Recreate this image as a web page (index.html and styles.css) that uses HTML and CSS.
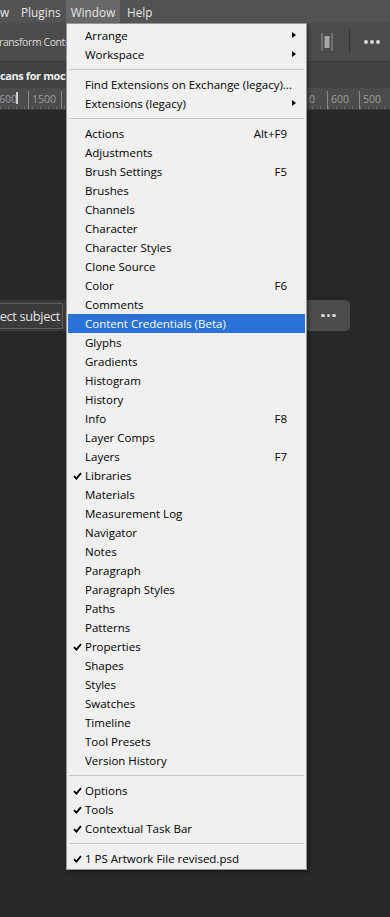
FILE: index.html
```html
<!DOCTYPE html>
<html>
<head>
<meta charset="utf-8">
<link rel="stylesheet" href="styles.css">
</head>
<body>
<div class="app">
  <div class="menubar">
    <span class="mb-item mb-clip">w</span>
    <span class="mb-item mb-plugins">Plugins</span>
    <span class="mb-item mb-active">Window</span>
    <span class="mb-item mb-help">Help</span>
  </div>
  <div class="optionsbar">
    <span class="opt-text">ransform Controls</span>
    <div class="opt-right">
      <svg class="opt-icon" width="12" height="18" viewBox="0 0 12 18"><rect x="0.5" y="0" width="1" height="18" fill="#9a9a9a"/><rect x="10.5" y="0" width="1" height="18" fill="#9a9a9a"/><rect x="3.5" y="3" width="5" height="12" fill="#a8a8a8"/></svg>
      <span class="opt-sep"></span>
      <span class="dots">
        <i></i><i></i><i></i>
      </span>
    </div>
  </div>
  <div class="tabbar"><span class="tab-text">cans for mockup.psd</span></div>
  <div class="ruler">
    <span class="r-num r1">600</span><span class="r-tick t-a"></span>
    <span class="r-num r2">1500</span>
    <span class="r-num r3">1</span>
    <span class="r-num r4">0</span>
    <span class="r-num r5">600</span>
    <span class="r-num r6">500</span>
  </div>
  <div class="canvas">
    <div class="taskbar">
      <div class="tb-btn"><span class="tb-label">ect subject</span></div>
      <div class="tb-more"><span class="dots small"><i></i><i></i><i></i></span></div>
    </div>
  </div>

  <div class="menu">
    <div class="mi"><span class="lbl">Arrange</span><span class="arrow"></span></div>
    <div class="mi"><span class="lbl">Workspace</span><span class="arrow"></span></div>
    <div class="sep"></div>
    <div class="mi"><span class="lbl">Find Extensions on Exchange (legacy)...</span></div>
    <div class="mi"><span class="lbl">Extensions (legacy)</span><span class="arrow"></span></div>
    <div class="sep"></div>
    <div class="mi"><span class="lbl">Actions</span><span class="sc">Alt+F9</span></div>
    <div class="mi"><span class="lbl">Adjustments</span></div>
    <div class="mi"><span class="lbl">Brush Settings</span><span class="sc">F5</span></div>
    <div class="mi"><span class="lbl">Brushes</span></div>
    <div class="mi"><span class="lbl">Channels</span></div>
    <div class="mi"><span class="lbl">Character</span></div>
    <div class="mi"><span class="lbl">Character Styles</span></div>
    <div class="mi"><span class="lbl">Clone Source</span></div>
    <div class="mi"><span class="lbl">Color</span><span class="sc">F6</span></div>
    <div class="mi"><span class="lbl">Comments</span></div>
    <div class="mi hl"><span class="lbl">Content Credentials (Beta)</span></div>
    <div class="mi"><span class="lbl">Glyphs</span></div>
    <div class="mi"><span class="lbl">Gradients</span></div>
    <div class="mi"><span class="lbl">Histogram</span></div>
    <div class="mi"><span class="lbl">History</span></div>
    <div class="mi"><span class="lbl">Info</span><span class="sc">F8</span></div>
    <div class="mi"><span class="lbl">Layer Comps</span></div>
    <div class="mi"><span class="lbl">Layers</span><span class="sc">F7</span></div>
    <div class="mi chk"><svg class="check" width="9" height="8" viewBox="0 0 9 8"><path d="M1 4.2 L3.4 6.6 L8 1.2" fill="none" stroke="#000" stroke-width="1.8"/></svg><span class="lbl">Libraries</span></div>
    <div class="mi"><span class="lbl">Materials</span></div>
    <div class="mi"><span class="lbl">Measurement Log</span></div>
    <div class="mi"><span class="lbl">Navigator</span></div>
    <div class="mi"><span class="lbl">Notes</span></div>
    <div class="mi"><span class="lbl">Paragraph</span></div>
    <div class="mi"><span class="lbl">Paragraph Styles</span></div>
    <div class="mi"><span class="lbl">Paths</span></div>
    <div class="mi"><span class="lbl">Patterns</span></div>
    <div class="mi chk"><svg class="check" width="9" height="8" viewBox="0 0 9 8"><path d="M1 4.2 L3.4 6.6 L8 1.2" fill="none" stroke="#000" stroke-width="1.8"/></svg><span class="lbl">Properties</span></div>
    <div class="mi"><span class="lbl">Shapes</span></div>
    <div class="mi"><span class="lbl">Styles</span></div>
    <div class="mi"><span class="lbl">Swatches</span></div>
    <div class="mi"><span class="lbl">Timeline</span></div>
    <div class="mi"><span class="lbl">Tool Presets</span></div>
    <div class="mi"><span class="lbl">Version History</span></div>
    <div class="sep"></div>
    <div class="mi chk"><svg class="check" width="9" height="8" viewBox="0 0 9 8"><path d="M1 4.2 L3.4 6.6 L8 1.2" fill="none" stroke="#000" stroke-width="1.8"/></svg><span class="lbl">Options</span></div>
    <div class="mi chk"><svg class="check" width="9" height="8" viewBox="0 0 9 8"><path d="M1 4.2 L3.4 6.6 L8 1.2" fill="none" stroke="#000" stroke-width="1.8"/></svg><span class="lbl">Tools</span></div>
    <div class="mi chk"><svg class="check" width="9" height="8" viewBox="0 0 9 8"><path d="M1 4.2 L3.4 6.6 L8 1.2" fill="none" stroke="#000" stroke-width="1.8"/></svg><span class="lbl">Contextual Task Bar</span></div>
    <div class="sep"></div>
    <div class="mi chk"><svg class="check" width="9" height="8" viewBox="0 0 9 8"><path d="M1 4.2 L3.4 6.6 L8 1.2" fill="none" stroke="#000" stroke-width="1.8"/></svg><span class="lbl">1 PS Artwork File revised.psd</span></div>
  </div>
</div>
</body>
</html>
```

FILE: styles.css
```css
* { box-sizing: border-box; }
html, body { margin: 0; padding: 0; }
body {
  background: #282828;
  font-family: "Open Sans", "Noto Sans", sans-serif;
  width: 390px;
  height: 917px;
  overflow: hidden;
}
.app {
  position: relative;
  width: 390px;
  height: 917px;
  overflow: hidden;
  display: flex;
  flex-direction: column;
}
.menubar {
  height: 23px;
  background: #535353;
  display: flex;
  align-items: stretch;
  color: #e6e6e6;
  font-size: 11.8px;
}
.mb-item {
  display: flex;
  align-items: center;
  white-space: nowrap;
}
.mb-clip { width: 21px; padding-left: 0; }
.mb-plugins { width: 45px; }
.mb-active { background: #686868; width: 54px; justify-content: center; }
.mb-help { padding-left: 7px; }
.optionsbar {
  height: 39px;
  background: #4b4b4b;
  display: flex;
  align-items: center;
  justify-content: space-between;
  border-bottom: 1px solid #3a3a3a;
}
.opt-text {
  color: #dcdcdc;
  font-size: 10.4px;
  letter-spacing: -0.35px;
  white-space: nowrap;
  margin-left: -1px;
}
.opt-right {
  display: flex;
  align-items: center;
  height: 100%;
}
.opt-icon { margin-right: 16px; }
.opt-sep {
  width: 1px;
  height: 24px;
  background: #333;
  margin-right: 14px;
}
.dots {
  display: flex;
  gap: 2px;
  margin-right: 10px;
}
.dots i {
  display: block;
  width: 4px;
  height: 4px;
  border-radius: 50%;
  background: #d6d6d6;
}
.tabbar {
  height: 26px;
  background: #424242;
  display: flex;
  align-items: center;
}
.tab-text {
  color: #f0f0f0;
  font-weight: bold;
  font-size: 11px;
  letter-spacing: -0.4px;
  white-space: nowrap;
}
.ruler {
  height: 22px;
  position: relative;
  border-bottom: 1px solid #3e3e3e;
  background-image: repeating-linear-gradient(90deg, #6a6a6a 0 1px, transparent 1px 8px);
  background-size: 100% 3px;
  background-position: 0 100%;
  background-repeat: no-repeat;
  background-color: #4c4c4c;
}
.r-num {
  position: absolute;
  top: 3px;
  font-size: 10.5px;
  color: #9e9e9e;
  padding-left: 3px;
  border-left: 1px solid #8a8a8a;
  line-height: 16px;
  height: 18px;
}
.r1 { left: -4px; border-left: none; }
.t-a { position: absolute; left: 16px; top: 4px; width: 2px; height: 12px; background: #cfcfcf; }
.r2 { left: 28px; }
.r3 { left: 61px; }
.r4 { left: 305px; }
.r5 { left: 327px; }
.r6 { left: 359px; }
.canvas {
  flex: 1;
  background: #282828;
}
.taskbar {
  margin-top: 190px;
  margin-left: -20px;
  width: 370px;
  height: 31px;
  background: #3a3a3a;
  border-radius: 0 5px 5px 0;
  display: flex;
  align-items: center;
  justify-content: space-between;
}
.tb-btn {
  height: 26px;
  width: 83px;
  border: 1px solid #5e5e5e;
  border-left: none;
  display: flex;
  align-items: center;
  justify-content: flex-end;
  padding-right: 2px;
  color: #e2e2e2;
  font-size: 12.8px;
  letter-spacing: -0.35px;
  white-space: nowrap;
}
.tb-label { flex-shrink: 0; }
.tb-more {
  width: 43px;
  height: 31px;
  background: #4c4c4c;
  border-radius: 0 5px 5px 0;
  display: flex;
  align-items: center;
  justify-content: center;
}
.dots.small { margin-right: 0; gap: 2px; }
.dots.small i { width: 3.5px; height: 3.5px; }

.menu {
  position: absolute;
  left: 66px;
  top: 23px;
  width: 241px;
  background: #f0f0f0;
  border: 1px solid #979797;
  padding: 2px 1px 1px 1px;
  box-shadow: 2px 2px 3px rgba(0,0,0,0.35);
  color: #000;
  font-size: 11.5px;
}
.mi {
  height: 19px;
  display: flex;
  align-items: center;
  padding: 0 18px 0 17px;
  position: relative;
  white-space: nowrap;
}
.mi .lbl { flex: 1; }
.mi .sc { text-align: right; }
.mi.hl { background: #2b72d7; color: #fff; }
.check {
  position: absolute;
  left: 5px;
  top: 6px;
}
.arrow {
  position: absolute;
  right: 9px;
  top: 6px;
  width: 0;
  height: 0;
  border-top: 3.5px solid transparent;
  border-bottom: 3.5px solid transparent;
  border-left: 4px solid #000;
}
.sep {
  height: 1px;
  background: #c4c4c4;
  margin: 5px 1px;
}
```
